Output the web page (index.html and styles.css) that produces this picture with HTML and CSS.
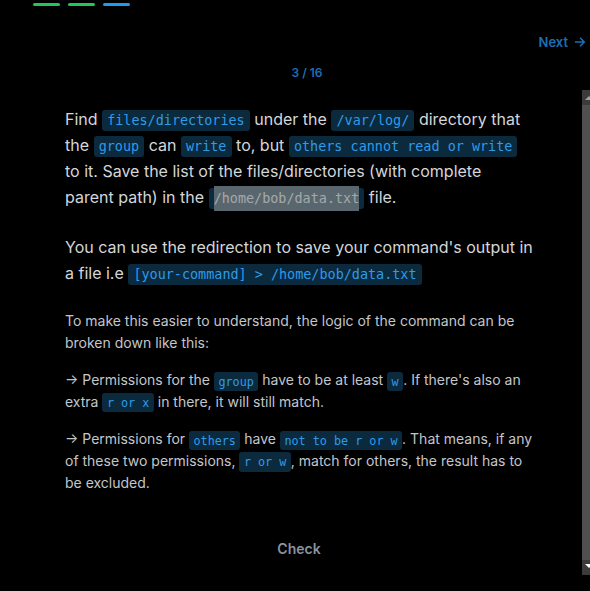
FILE: index.html
```html
<!DOCTYPE html>
<html lang="en">
<head>
<meta charset="utf-8">
<title>Lab question 3 / 16</title>
<link rel="stylesheet" href="styles.css">
</head>
<body>
<div class="page">
  <div class="progress">
    <span class="seg done"></span>
    <span class="seg done"></span>
    <span class="seg current"></span>
  </div>
  <div class="topnav">
    <a class="next" href="#">Next
      <svg class="arrow" viewBox="0 0 12 12" width="12" height="12" aria-hidden="true"><path d="M1.5 6h8.5M6.5 2.2 10.3 6 6.5 9.8" fill="none" stroke="currentColor" stroke-width="1.6" stroke-linecap="round" stroke-linejoin="round"/></svg>
    </a>
  </div>
  <div class="counter">3 / 16</div>
  <div class="panel">
    <div class="content">
      <p class="lead">Find <code>files/directories</code> under the <code>/var/log/</code> directory that the <code>group</code> can <code>write</code> to, but <code>others cannot read or write</code> to it. Save the list of the files/directories (with complete parent path) in the <code><span class="sel">/home/bob/data.txt</span></code> file.</p>
      <p class="lead">You can use the redirection to save your command's output in a file i.e <code>[your-command] &gt; /home/bob/data.txt</code></p>
      <p class="note first">To make this easier to understand, the logic of the command can be broken down like this:</p>
      <p class="note">→ Permissions for the <code>group</code> have to be at least <code>w</code>. If there's also an extra <code>r or x</code> in there, it will still match.</p>
      <p class="note last">→ Permissions for <code>others</code> have <code>not to be r or w</code>. That means, if any of these two permissions, <code>r or w</code>, match for others, the result has to be excluded.</p>
      <div class="actions"><button class="check" type="button">Check</button></div>
    </div>
    <div class="scrollbar" aria-hidden="true">
      <span class="sb-btn up"></span>
      <span class="sb-thumb"></span>
      <span class="sb-btn down"></span>
    </div>
  </div>
</div>
</body>
</html>
```
FILE: styles.css
```css
html, body {
  margin: 0;
  padding: 0;
  background: #000;
}
body {
  width: 590px;
  height: 591px;
  overflow: hidden;
  font-family: Inter, "Noto Sans", "Liberation Sans", sans-serif;
  color: #d2d5d9;
}
.page {
  display: flex;
  flex-direction: column;
}
.progress {
  display: flex;
  gap: 8px;
  padding: 3px 0 0 33px;
  height: 3px;
}
.seg {
  width: 27px;
  height: 3px;
  border-radius: 2px;
}
.seg.done { background: #22c55e; }
.seg.current { background: #1d9bf0; }
.topnav {
  display: flex;
  justify-content: flex-end;
  margin-top: 27px;
  padding-right: 4px;
  height: 18px;
}
.next {
  display: flex;
  align-items: center;
  gap: 6px;
  color: #1b6fb7;
  font-size: 13px;
  font-weight: 600;
  line-height: 18px;
  text-decoration: none;
}
.arrow { display: block; }
.counter {
  margin-top: 14px;
  text-align: center;
  color: #1b6fb7;
  font-size: 12px;
  font-weight: 600;
  line-height: 16px;
  padding-left: 24px;
}
.panel {
  position: relative;
  margin-top: 9px;
  height: 485px;
  overflow: hidden;
}
.content {
  width: 468px;
  padding: 16px 0 0 65px;
}
p { margin: 0; }
.lead {
  font-size: 16px;
  line-height: 26px;
  margin-bottom: 24px;
  color: #d4d6da;
}
.note {
  font-size: 14px;
  line-height: 21.6px;
  margin-bottom: 16px;
  color: #c3c6cb;
}
.note.last { margin-bottom: 0; }
code {
  font-family: "DejaVu Sans Mono", "Liberation Mono", monospace;
  font-size: 0.84em;
  line-height: 1;
  color: #2f9be8;
  background: #0b2a3e;
  padding: 0.22em 0.38em;
  border-radius: 3px;
}
.sel {
  background: #5a666d;
  color: #a3aaae;
  padding: 5px 0;
}
.actions {
  display: flex;
  justify-content: center;
  margin-top: 46px;
}
.check {
  background: none;
  border: 0;
  padding: 0;
  font-family: inherit;
  font-size: 14px;
  font-weight: 600;
  line-height: 20px;
  color: #8795a3;
}
.scrollbar {
  position: absolute;
  top: 0;
  right: 0;
  width: 8px;
  height: 485px;
  background: #3b3b3b;
  display: flex;
  flex-direction: column;
  overflow: hidden;
}
.sb-btn {
  height: 14px;
  flex: none;
  position: relative;
}
.sb-btn::after {
  content: "";
  position: absolute;
  left: 3px;
  width: 0;
  height: 0;
  border-left: 4px solid transparent;
  border-right: 4px solid transparent;
}
.sb-btn.up::after {
  top: 6px;
  border-bottom: 4px solid #a0a0a0;
}
.sb-btn.down::after {
  top: 3px;
  border-top: 4px solid #ffffff;
}
.sb-thumb {
  flex: 1;
  margin: 1px 0 1px 0;
  background: #505050;
}
```
